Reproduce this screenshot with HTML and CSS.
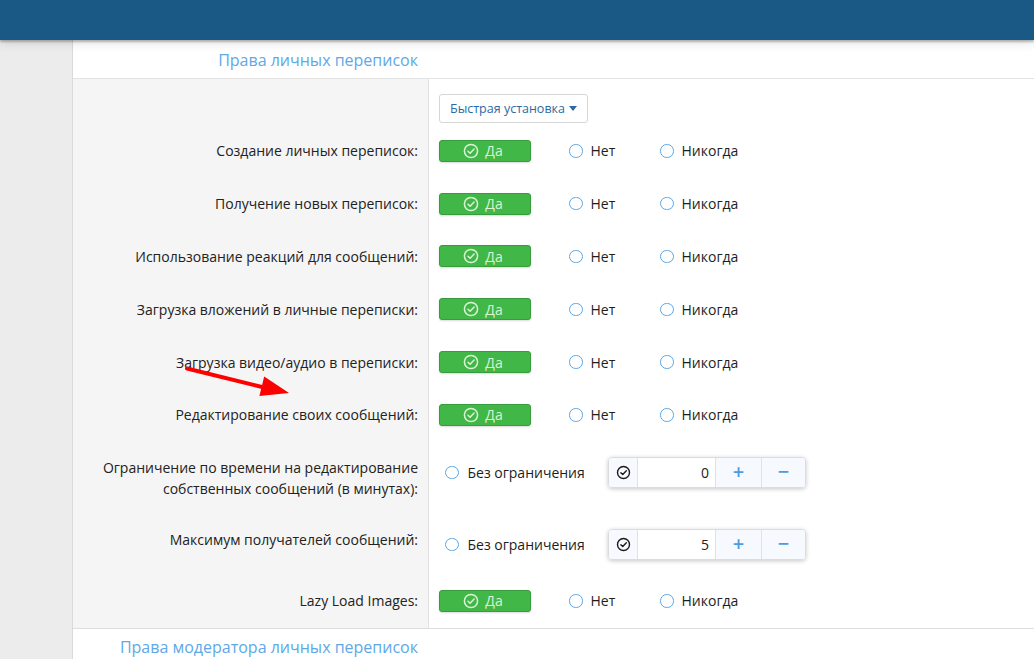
FILE: index.html
```html
<!DOCTYPE html>
<html>
<head>
<meta charset="utf-8">
<link rel="stylesheet" href="styles.css">
</head>
<body>
<div class="topbar"></div>
<div class="main">
  <div class="gutter"></div>
  <div class="content">
    <div class="section-title"><span class="title-text">Права личных переписок</span></div>
    <div class="row row-quick">
      <div class="label"></div>
      <div class="ctrl"><button class="quick">Быстрая установка <span class="caret"></span></button></div>
    </div>

    <div class="row">
      <div class="label">Создание личных переписок:</div>
      <div class="ctrl">
        <span class="yes"><svg class="ico" viewBox="0 0 16 16"><circle cx="8" cy="8" r="6.6"/><path d="M5 8.2l2.1 2.1 4-4.2"/></svg>Да</span>
        <span class="opt opt-no"><span class="radio"></span>Нет</span>
        <span class="opt"><span class="radio"></span>Никогда</span>
      </div>
    </div>
    <div class="row">
      <div class="label">Получение новых переписок:</div>
      <div class="ctrl">
        <span class="yes"><svg class="ico" viewBox="0 0 16 16"><circle cx="8" cy="8" r="6.6"/><path d="M5 8.2l2.1 2.1 4-4.2"/></svg>Да</span>
        <span class="opt opt-no"><span class="radio"></span>Нет</span>
        <span class="opt"><span class="radio"></span>Никогда</span>
      </div>
    </div>
    <div class="row">
      <div class="label">Использование реакций для сообщений:</div>
      <div class="ctrl">
        <span class="yes"><svg class="ico" viewBox="0 0 16 16"><circle cx="8" cy="8" r="6.6"/><path d="M5 8.2l2.1 2.1 4-4.2"/></svg>Да</span>
        <span class="opt opt-no"><span class="radio"></span>Нет</span>
        <span class="opt"><span class="radio"></span>Никогда</span>
      </div>
    </div>
    <div class="row">
      <div class="label">Загрузка вложений в личные переписки:</div>
      <div class="ctrl">
        <span class="yes"><svg class="ico" viewBox="0 0 16 16"><circle cx="8" cy="8" r="6.6"/><path d="M5 8.2l2.1 2.1 4-4.2"/></svg>Да</span>
        <span class="opt opt-no"><span class="radio"></span>Нет</span>
        <span class="opt"><span class="radio"></span>Никогда</span>
      </div>
    </div>
    <div class="row">
      <div class="label">Загрузка видео/аудио в переписки:</div>
      <div class="ctrl">
        <span class="yes"><svg class="ico" viewBox="0 0 16 16"><circle cx="8" cy="8" r="6.6"/><path d="M5 8.2l2.1 2.1 4-4.2"/></svg>Да</span>
        <span class="opt opt-no"><span class="radio"></span>Нет</span>
        <span class="opt"><span class="radio"></span>Никогда</span>
      </div>
    </div>
    <div class="row">
      <div class="label">Редактирование своих сообщений:</div>
      <div class="ctrl">
        <span class="yes"><svg class="ico" viewBox="0 0 16 16"><circle cx="8" cy="8" r="6.6"/><path d="M5 8.2l2.1 2.1 4-4.2"/></svg>Да</span>
        <span class="opt opt-no"><span class="radio"></span>Нет</span>
        <span class="opt"><span class="radio"></span>Никогда</span>
      </div>
    </div>
    <div class="row row-top row-time">
      <div class="label">Ограничение по времени на редактирование<br>собственных сообщений (в минутах):</div>
      <div class="ctrl ctrl-num">
        <span class="opt opt-unl"><span class="radio"></span>Без ограничения</span>
        <span class="spin">
          <span class="spin-ico"><svg class="ico-dark" viewBox="0 0 16 16"><circle cx="8" cy="8" r="6.4"/><path d="M5.2 8.2l2 2 3.8-4"/></svg></span>
          <span class="spin-val">0</span>
          <span class="spin-btn">+</span>
          <span class="spin-btn spin-minus">−</span>
        </span>
      </div>
    </div>
    <div class="row row-top row-max">
      <div class="label">Максимум получателей сообщений:</div>
      <div class="ctrl ctrl-num">
        <span class="opt opt-unl"><span class="radio"></span>Без ограничения</span>
        <span class="spin">
          <span class="spin-ico"><svg class="ico-dark" viewBox="0 0 16 16"><circle cx="8" cy="8" r="6.4"/><path d="M5.2 8.2l2 2 3.8-4"/></svg></span>
          <span class="spin-val">5</span>
          <span class="spin-btn">+</span>
          <span class="spin-btn spin-minus">−</span>
        </span>
      </div>
    </div>
    <div class="row">
      <div class="label">Lazy Load Images:</div>
      <div class="ctrl">
        <span class="yes"><svg class="ico" viewBox="0 0 16 16"><circle cx="8" cy="8" r="6.6"/><path d="M5 8.2l2.1 2.1 4-4.2"/></svg>Да</span>
        <span class="opt opt-no"><span class="radio"></span>Нет</span>
        <span class="opt"><span class="radio"></span>Никогда</span>
      </div>
    </div>
    <div class="section-title section-bottom"><span class="title-text">Права модератора личных переписок</span></div>
  </div>
</div>
<svg class="arrow" width="1034" height="659" viewBox="0 0 1034 659">
  <line x1="187" y1="368.5" x2="264" y2="387.5" stroke="#ff0000" stroke-width="4" stroke-linecap="round"/>
  <polygon points="289,393 264.2,376.5 259.4,395.9" fill="#ff0000"/>
</svg>
</body>
</html>
```
FILE: styles.css
```css
html, body {
  margin: 0;
  padding: 0;
  height: 100%;
  overflow: hidden;
}
body {
  font-family: "Open Sans", "Noto Sans", sans-serif;
  font-size: 14px;
  color: #222;
  background: #ececec;
  position: relative;
}
.topbar {
  height: 40px;
  background: #1a5886;
  position: relative;
  z-index: 2;
  box-shadow: 0 2px 2px rgba(0,0,0,0.25), 0 3px 10px rgba(0,0,0,0.12);
}
.main {
  display: flex;
  height: 619px;
}
.gutter {
  width: 72px;
  background: #ececec;
  border-right: 1px solid #dadada;
  flex: none;
}
.content {
  flex: 1;
  background: #fff;
  display: flex;
  flex-direction: column;
  overflow: hidden;
}
.section-title {
  flex: none;
  height: 39px;
  display: flex;
  align-items: center;
  justify-content: flex-end;
  width: 355px;
  position: relative;
}
.section-title::after {
  content: "";
  position: absolute;
  left: 0;
  bottom: 0;
  width: 961px;
  height: 1px;
  background: #e3e3e3;
}
.title-text {
  font-size: 16px;
  color: #5ea8e8;
  padding-right: 10px;
  padding-top: 1px;
}
.section-bottom {
  border-top: 1px solid #dedede;
  height: 36px;
  width: 961px;
  justify-content: flex-start;
}
.section-bottom::after { display: none; }
.section-bottom .title-text {
  width: 345px;
  text-align: right;
  padding-top: 1px;
}
.row {
  flex: none;
  display: flex;
  height: 52.8px;
}
.row-quick { height: 46px; }
.row-time { height: 69px; }
.row-max { height: 64.2px; }
.label {
  width: 345px;
  padding-right: 10px;
  background: #f5f5f5;
  border-right: 1px solid #e2e2e2;
  flex: none;
  display: flex;
  align-items: center;
  justify-content: flex-end;
  text-align: right;
  line-height: 21px;
  padding-bottom: 1px;
}
.ctrl {
  flex: 1;
  padding-left: 10px;
  display: flex;
  align-items: center;
  padding-bottom: 1px;
}
.row-quick .ctrl { align-items: flex-start; padding-top: 15px; }
.row-top .label { align-items: flex-start; }
.row-time .label { padding-top: 15px; }
.row-time .ctrl { align-items: flex-start; padding-top: 15px; }
.row-max .label { padding-top: 18px; }
.row-max .ctrl { align-items: flex-start; padding-top: 18px; }

.quick {
  font-family: inherit;
  font-size: 12.5px;
  color: #2b6aa3;
  background: #fff;
  border: 1px solid #d6d6d6;
  border-radius: 3px;
  height: 29px;
  width: 149px;
  padding: 0;
  display: flex;
  align-items: center;
  justify-content: center;
  gap: 4px;
}
.caret {
  width: 0;
  height: 0;
  border-left: 4px solid transparent;
  border-right: 4px solid transparent;
  border-top: 5px solid #2b6aa3;
}
.yes {
  box-sizing: border-box;
  width: 92px;
  height: 22px;
  background: #41b748;
  border: 1px solid #389b3d;
  border-radius: 3px;
  box-shadow: 0 1px 2px rgba(0,0,0,0.15);
  color: #d9f5d6;
  display: flex;
  align-items: center;
  justify-content: center;
  gap: 6px;
  font-size: 14px;
  padding-right: 4px;
}
.ico {
  width: 16px;
  height: 16px;
  fill: none;
  stroke: #d9f5d6;
  stroke-width: 1.5;
  stroke-linecap: round;
  stroke-linejoin: round;
}
.opt {
  display: flex;
  align-items: center;
  gap: 8px;
  font-size: 14px;
  color: #1e1e1e;
}
.opt-no { margin-left: 38px; width: 91px; }
.radio {
  width: 11.5px;
  height: 11.5px;
  border: 1.8px solid #5aa6e8;
  border-radius: 50%;
  flex: none;
}
.opt-unl { margin-left: 6px; width: 163px; height: 31px; gap: 9px; }
.spin {
  display: flex;
  height: 29px;
  width: 196px;
  border: 1px solid #dcdcdc;
  border-radius: 4px;
  box-shadow: 0 1px 4px rgba(0,0,0,0.22);
  overflow: hidden;
}
.spin-ico {
  width: 28px;
  background: #f6f9fd;
  border-right: 1px solid #e2e2e2;
  display: flex;
  align-items: center;
  justify-content: center;
}
.ico-dark {
  width: 15px;
  height: 15px;
  fill: none;
  stroke: #1a1a1a;
  stroke-width: 1.5;
  stroke-linecap: round;
  stroke-linejoin: round;
}
.spin-val {
  width: 71px;
  padding-right: 6px;
  background: #fff;
  border-right: 1px solid #e2e2e2;
  display: flex;
  align-items: center;
  justify-content: flex-end;
  font-size: 14px;
}
.spin-btn {
  width: 45px;
  background: #f6f9fd;
  border-right: 1px solid #e2e2e2;
  color: #4a9be2;
  font-size: 20px;
  font-weight: 600;
  display: flex;
  align-items: center;
  justify-content: center;
  line-height: 1;
}
.spin-minus { border-right: none; flex: 1; }
.arrow {
  position: absolute;
  left: 0;
  top: 0;
  pointer-events: none;
  z-index: 5;
}
```
